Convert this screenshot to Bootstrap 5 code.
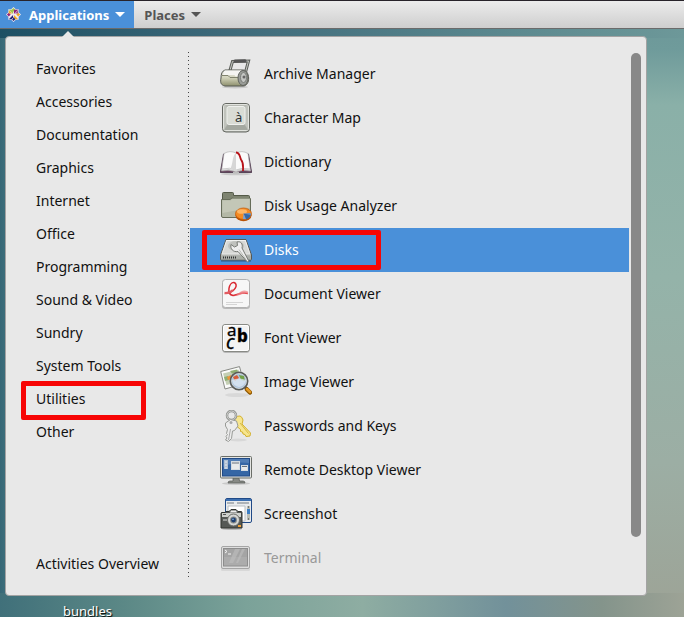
<!DOCTYPE html>
<html lang="en">
<head>
<meta charset="utf-8">
<meta name="viewport" content="width=device-width, initial-scale=1">
<title>Applications menu</title>
<link href="https://cdn.jsdelivr.net/npm/bootstrap@5.3.0/dist/css/bootstrap.min.css" rel="stylesheet">
<style>
body{font-family:"Noto Sans","Open Sans",sans-serif;font-size:14px;line-height:20px;color:#111;
 background:
 linear-gradient(90deg,#1d4f63 0,#3f6b7b 35%,#5c898f 75%,#6d9899 100%) top/100% 38px no-repeat,
 linear-gradient(90deg,#40707a 0,#5b8886 18%,#7ba299 36%,#8eada2 53%,#72919a 74%,#84948b 88%,#9da396 100%) bottom/100% 24px no-repeat,
 linear-gradient(90deg,#1d4f6380 0,#1d4f6300 20px) no-repeat,
 linear-gradient(90deg,#50808a 0,#50808a 3%,transparent 3%) no-repeat,
 linear-gradient(180deg,#6a9597 0,#6f9b9b 8%,#8ab0a8 17%,#94b3a9 45%,#9caea4 75%,#9da396 100%)}
.topbar{height:29px;background:linear-gradient(#ececec,#cecece);border-top:1px solid #28232a;border-bottom:1px solid #6b6b6b}
.topbar .btn{font-size:13px;font-weight:700;line-height:20px;border:0;border-radius:0;color:#555;padding:0 10px}
.topbar .btn.active{background:#4a90d9;color:#fff;padding:0 9px 0 6px}
.topbar .btn::after{content:"";border:5px solid transparent;border-top-color:currentColor;border-bottom:0;margin-left:6px}
.logo{width:15px;height:15px;margin-right:8px}
.app-menu{margin:7px 37px 0 5px;background:#e8e8e8;border:1px solid #a3a3a3;border-radius:4px;padding:15px 5px 15px 0}
.app-menu::before{content:"";position:absolute;left:56px;top:-6px;border:6px solid transparent;border-bottom-color:#e8e8e8;border-top:0}
.cats{width:183px;padding-left:15px;background:repeating-linear-gradient(#444 0 1px,transparent 1px 4px) right top/1px 100% no-repeat}
.cats .btn{height:33px;padding:0 15px}
.apps{padding:0 2px 0 1px}
.apps .btn{height:44px;padding:0 30px;gap:12px}
.app-menu .btn{font-size:14px;border:0;border-radius:0;text-align:left;color:#111;line-height:20px}
.apps .btn.active{background:#4a90d9;color:#fff}
.apps .btn.faded{color:#999}
.apps svg{width:32px;height:32px;flex:none}
.marked::after{content:"";position:absolute;border:5px solid #f70505;border-radius:2px}
.cats .marked::after{left:0;top:-1px;width:125px;height:39px}
.apps .marked::after{left:12px;top:2px;width:179px;height:40px}
.thumb{width:10px;height:484px;border-radius:5px;background:#888;margin-top:1px}
.desk-icon{color:#fff;font-size:13px;margin:5px 0 0 63px;text-shadow:1px 1px 1px #000}
</style>
<script defer src="https://cdn.jsdelivr.net/npm/bootstrap@5.3.0/dist/js/bootstrap.bundle.min.js"></script>
</head>
<body class="vh-100 overflow-hidden">
<header class="topbar d-flex">
 <button type="button" class="btn active d-flex align-items-center">
  <svg class="logo" viewBox="0 0 16 16" aria-hidden="true"><path fill="#f4e9ee" d="M8 0l2.500 2.500H13.500V5.500L16 8l-2.500 2.500v3h-3L8 16l-2.500-2.500h-3v-3L0 8l2.500-2.500v-3h3z"/><path fill="#a1c64b" d="M3 3h4.500v4.500zM8 1l2 2-2 2-2-2z"/><path fill="#932279" d="M13 3H8.500v4.500zM1 8l2-2 2 2-2 2z"/><path fill="#efa724" d="M13 13H8.500V8.500zM15 8l-2-2-2 2 2 2z"/><path fill="#262577" d="M3 13h4.500V8.500zM8 15l-2-2 2-2 2 2z"/><path fill="#efa724" d="M3 3.500v3.500l3.500 0z"/><path fill="#a14f8c" d="M13 3.500v3.500H9.500z"/></svg>Applications</button>
 <button type="button" class="btn d-flex align-items-center">Places</button>
</header>
<main class="app-menu position-relative d-flex">
 <nav class="cats d-flex flex-column flex-shrink-0" aria-label="Categories">
  <button type="button" class="btn">Favorites</button>
  <button type="button" class="btn">Accessories</button>
  <button type="button" class="btn">Documentation</button>
  <button type="button" class="btn">Graphics</button>
  <button type="button" class="btn">Internet</button>
  <button type="button" class="btn">Office</button>
  <button type="button" class="btn">Programming</button>
  <button type="button" class="btn">Sound &amp; Video</button>
  <button type="button" class="btn">Sundry</button>
  <button type="button" class="btn">System Tools</button>
  <button type="button" class="btn marked position-relative">Utilities</button>
  <button type="button" class="btn">Other</button>
  <button type="button" class="btn mt-auto">Activities Overview</button>
 </nav>
 <section class="apps d-flex flex-column flex-grow-1" aria-label="Utilities">
  <button type="button" class="btn d-flex align-items-center">
   <svg viewBox="0 0 32 32" aria-hidden="true"><defs><linearGradient id="metal" x2="0" y2="1"><stop stop-color="#fff"/><stop offset="1" stop-color="#a5a7a0"/></linearGradient><linearGradient id="olive" x2="0" y2="1"><stop stop-color="#eee"/><stop offset=".5" stop-color="#d0d1b8"/><stop offset="1" stop-color="#8d8f6d"/></linearGradient></defs><ellipse cx="15" cy="29" rx="13" ry="1.500" fill="#0002"/><path d="M9.500 14l3-10.500 16-.5-3.500 13" fill="none" stroke="#5d605b" stroke-width="3"/><path d="M9.500 14l3-10.500 16-.5-3.500 13" fill="none" stroke="#c5c7c3"/><path d="M15 3.200l10-.3" stroke="#555" stroke-width="3.200" stroke-linecap="round"/><path d="M5 12h18c7 0 8 16 0 16H5c-4-1-5-3-4-8 0-4 1-7 4-8z" fill="url(#olive)" stroke="#555851"/><path d="M4.500 12.500h17v6h-6l-1-1.500H3z" fill="#f5f5f2"/><path d="M2 17.500h6l2 2h9" fill="none" stroke="#80836d"/><ellipse cx="23" cy="20" rx="5" ry="7.500" fill="#9a9d98" stroke="#60635f"/><ellipse cx="23.500" cy="19.500" rx="3" ry="5" fill="#c4c6c3" stroke="#7b7e7a"/><circle cx="24" cy="19" r="1.500" fill="#666"/></svg>Archive Manager</button>
  <button type="button" class="btn d-flex align-items-center">
   <svg viewBox="0 0 32 32" aria-hidden="true"><rect x="2.500" y="1.500" width="27" height="28.500" rx="3.500" fill="#b7bab3" stroke="#656862"/><rect x="3.500" y="2.500" width="25" height="26" rx="2.500" fill="none" stroke="#e2e4df"/><path d="M4 3l4 3v15l-4 6zM28 3l-4 3v15l4 6z" fill="#c0c3bc"/><path d="M4 28l4-6h16l4 6z" fill="#a4a8a0"/><rect x="7" y="4.500" width="18" height="18" rx="2" fill="#d9dcd5" stroke="#eff0ed"/><text x="15" y="20" font-size="13" fill="#2e3436" font-family="Noto Sans,sans-serif">à</text></svg>Character Map</button>
  <button type="button" class="btn d-flex align-items-center">
   <svg viewBox="0 0 32 32" aria-hidden="true"><ellipse cx="16" cy="28" rx="15" ry="1.300" fill="#0002"/><path d="M3.500 8H28.500L31.700 26.500H.3z" fill="#66445d" stroke="#38243a" stroke-width=".7"/><path d="M4 7.500Q10 4 16 7q6-3 12 .5L30.500 25q-8-2-14.500 1Q9.500 23 1.500 25z" fill="#fafafa" stroke="#aaa" stroke-width=".6"/><path d="M2 23q8-2 14 1 6-3 14-1M1.700 24.300q8-2 14.300 1 6-3 14.300-1" fill="none" stroke="#aaa" stroke-width=".6"/><path d="M16 7v18c-3-2-4-2-6-2 3-3 2-14 6-16z" fill="#d6d6d6"/><path d="M16 6.500c4 0 3.500 4 5 7 3 4 2 6 2 11.500" fill="none" stroke="#b71218" stroke-width="1.800"/><path d="M13 26h6v1.500h-6z" fill="#bbb"/></svg>Dictionary</button>
  <button type="button" class="btn d-flex align-items-center">
   <svg viewBox="0 0 32 32" aria-hidden="true"><path d="M2.500 14V3.500q0-1 1-1h9q1 0 1 1v2h15q1 0 1 1V14z" fill="#7e8471" stroke="#545a48"/><path d="M14 7h15v4H9z" fill="#9aa08c"/><path d="M1.500 9.500H10l2-1.500h17.500q1 0 1 1v17q0 1.500-1.500 1.500H3q-1.500 0-1.500-1.500z" fill="#b3b8a6" stroke="#666c59"/><path d="M2.500 10.500h8l2-1.500h17v9L2.500 23z" fill="#c3c7b7"/><ellipse cx="23.500" cy="25.500" rx="8" ry="5.800" fill="#b95205"/><ellipse cx="23.500" cy="23.700" rx="8" ry="5.700" fill="#f58b22" stroke="#c55d0a" stroke-width=".8"/><ellipse cx="22" cy="21.500" rx="5" ry="2.300" fill="#ffc078" opacity=".8"/><path d="M23.500 23.500l7.500 1q-1 4-5 5z" fill="#3468a8"/><path d="M23.500 23.500L23 29l3 .2z" fill="#7aa2d5"/><path d="M23.500 23.500l7-.5.5 2z" fill="#6191cc"/></svg>Disk Usage Analyzer</button>
  <button type="button" class="btn active marked position-relative d-flex align-items-center">
   <svg viewBox="0 0 32 32" aria-hidden="true"><path d="M1 26h30v2H1z" fill="#0003"/><path d="M6 5.500h20L31.500 21v4q0 1-1 1h-29q-1 0-1-1v-4z" fill="url(#metal)" stroke="#555753"/><path d="M6.700 6.500h18.600L30 20H2z" fill="#d8d9d6" stroke="#f7f7f7" stroke-width=".6"/><ellipse cx="16" cy="12" rx="8" ry="5" fill="#bfc1bd"/><path d="M1 21.500h30v4H1z" fill="#aaaea8"/><path d="M3 23.500h13" stroke="#333" stroke-width="2" stroke-dasharray="1 1"/><path d="M11 10.500l3.500 2.500 3-1.500-.5-3.500c4-1 6 2 5 6l6.500 12.500q.5 2-1 1.500L18 17.500c-5 1-8-3-7-7z" fill="#eee" stroke="#777a75"/><path d="M19 15.500l7 10" stroke="#babdb6"/></svg>Disks</button>
  <button type="button" class="btn d-flex align-items-center">
   <svg viewBox="0 0 32 32" aria-hidden="true"><rect x="2" y="2" width="28" height="29" rx="3" fill="#0003"/><rect x="2.500" y="1.500" width="27" height="28" rx="3" fill="#f7f7f7" stroke="#b2b2b2"/><path d="M5 15C15 15 19 6 14 4.500 9 4 6 16 13 17.500c5 0 7-4 15-2" fill="none" stroke="#d92730" stroke-width="1.500"/><path d="M13 17.500c6 0 8-8 15-4v2.500c-5-2-9 3-15 1.500z" fill="#ef8589" opacity=".75"/><path d="M4.500 15c3.500.5 6.500-1 8.500-3" stroke="#e25c62" stroke-width="2.300" fill="none"/><path d="M6 24.500h17M6 26.500h11" stroke="#ccc" stroke-width=".8"/></svg>Document Viewer</button>
  <button type="button" class="btn d-flex align-items-center">
   <svg viewBox="0 0 32 32" aria-hidden="true"><rect x="2.500" y="3" width="27" height="28" rx="3" fill="#0003"/><rect x="2.500" y="2.500" width="27" height="27" rx="2.500" fill="#f3f3f3" stroke="#888a85"/><rect x="3.500" y="3.500" width="25" height="25" rx="2" fill="none" stroke="#fff"/><text font-size="17" font-family="Noto Sans,sans-serif" stroke="#000" stroke-width=".3"><tspan x="7" y="14">a</tspan><tspan x="17" y="20" font-weight="800">b</tspan><tspan x="6" y="27" font-size="19" font-style="italic">c</tspan></text></svg>Font Viewer</button>
  <button type="button" class="btn d-flex align-items-center">
   <svg viewBox="0 0 32 32" aria-hidden="true"><ellipse cx="17" cy="29" rx="12" ry="2" fill="#0001"/><path d="M.7 5.500L19.500.6l4.700 17L5 23z" fill="#fbfbfb" stroke="#888a85"/><path d="M3 7.500L18.500 3.400l3 12L6.500 19z" fill="#c4cfb4"/><path d="M4 11l4-1 1 4-4 1zM10 5l7-1.500 1 3-6 1z" fill="#8fae72"/><path d="M7 11l4-2 1 4-4 1z" fill="#e8943d"/><circle cx="19" cy="15" r="8.500" fill="#a9c3df" fill-opacity=".9" stroke="#595c5a" stroke-width="2"/><circle cx="19" cy="15" r="7.500" fill="none" stroke="#d8dde0" stroke-width=".8"/><path d="M13 11l4-2 2 3-4 3z" fill="#d85c36"/><path d="M19 9l5 1 1 5-4-1z" fill="#74a249"/><path d="M12 14q7-3 14 0-1 6-7 7-6-1-7-7z" fill="#dfe8f3" opacity=".75"/><path d="M25 21l2 2" stroke="#555" stroke-width="3"/><path d="M27 23.500l3 3" stroke="#8f5902" stroke-width="4.500" stroke-linecap="round"/><path d="M27 23l3 3" stroke="#e39a27" stroke-width="2.500" stroke-linecap="round"/></svg>Image Viewer</button>
  <button type="button" class="btn d-flex align-items-center">
   <svg viewBox="0 0 32 32" aria-hidden="true"><ellipse cx="18" cy="30" rx="9" ry="1.500" fill="#0001"/><path d="M15 8q6-5 8 2l-1 4 8.500 9-.5 3-4 .5-1-2-2-.5-.5-2-2-.5v-2l-3.500-3q-5-3-2-8.500z" fill="#f7e68f" stroke="#d3b12e"/><path d="M20 13l8.500 10.500" stroke="#d9ba43"/><circle cx="11.500" cy="5.500" r="4.500" fill="none" stroke="#8f918e" stroke-width="2.500"/><circle cx="11.500" cy="5.500" r="4.500" fill="none" stroke="#d2d3d1"/><path d="M5.500 13l5-3.500 6 1.500 1.500 5-3.500 4.500-2 .5-1 7.500-3 3-3-1.500 1.500-2-1-1.500 1.500-2-1-1 1-4-2-3.500z" fill="#ececec" stroke="#999b97"/><path d="M10.500 19L8.500 30" stroke="#aaa"/><circle cx="11" cy="12.500" r="1.500" fill="#aaa"/></svg>Passwords and Keys</button>
  <button type="button" class="btn d-flex align-items-center">
   <svg viewBox="0 0 32 32" aria-hidden="true"><ellipse cx="16" cy="29.500" rx="14" ry="1.500" fill="#0002"/><path d="M13 24h6l.5 3H23q2 0 2 2H8q0-2 2-2h3z" fill="#888a85" stroke="#555753" stroke-width=".7"/><rect x=".5" y="2.500" width="31" height="21.500" rx="1" fill="#e4e5e2" stroke="#6b6e68"/><rect x="2.500" y="4.500" width="27" height="17.500" fill="#3566a5" stroke="#204a87"/><path d="M3 13Q14 7 29 9V5H3z" fill="#6a92c6" opacity=".5"/><rect x="4" y="6" width="4" height="9" fill="#aebfd2"/><path d="M5 8h2m-2 3h2m-2 3h2" stroke="#e4eaf1"/><rect x="11.500" y="7.500" width="8" height="8" fill="#e8eaeb" stroke="#d4dbe2"/><path d="M12 9h7" stroke="#66717d"/><rect x="21.500" y="11.500" width="6" height="5" fill="#e8eaeb" stroke="#d4dbe2"/><path d="M22 12.500h5" stroke="#66717d"/></svg>Remote Desktop Viewer</button>
  <button type="button" class="btn d-flex align-items-center">
   <svg viewBox="0 0 32 32" aria-hidden="true"><rect x="5.500" y=".5" width="26" height="24" rx="1.500" fill="#e9ebed" stroke="#204a87"/><path d="M6 1h25v2H6z" fill="#3d70b1"/><path d="M7 4h7v2H7zm10 0h12v2H17z" fill="#aeb3b7"/><path d="M8 8h17v15H8z" fill="#fff" stroke="#bbc0c4"/><path d="M28.500 8v14" stroke="#babdb6" stroke-width="3"/><path d="M28.500 11v5" stroke="#3d7fc4" stroke-width="3"/><path d="M28 9h1m-1 12h1" stroke="#333"/><ellipse cx="12" cy="31" rx="10" ry="1" fill="#0003"/><path d="M1.500 14.500H5l1-1h3l2-2h5l2 2h3q1 0 1 1V30h-21V15.500z" fill="#555855" stroke="#30332f"/><path d="M2 15h19v4H2z" fill="#cfd1cd"/><path d="M11 12.500h5l1 2h-7z" fill="#eee"/><circle cx="13.500" cy="22" r="6" fill="#d6d7d5" stroke="#696b67"/><circle cx="13.500" cy="22" r="3.500" fill="#8b8e8c"/><circle cx="13.500" cy="22" r="2.400" fill="#1e4072"/><circle cx="13" cy="21.300" r=".8" fill="#9cc1e8"/><path d="M3 22h4" stroke="#ddd"/><path d="M18 27h3v2h-3z" fill="#f0a23a"/><path d="M3 16.500h3" stroke="#555"/></svg>Screenshot</button>
  <button type="button" class="btn faded d-flex align-items-center">
   <svg viewBox="0 0 32 32" aria-hidden="true"><rect x="1" y="24" width="29" height="5" rx="1" fill="#0001"/><rect x="1.500" y="4.500" width="28" height="22" rx="1.500" fill="#dedede" stroke="#a5a5a5"/><rect x="3.500" y="6.500" width="24" height="17.500" fill="#a4a4a4" stroke="#8d8d8d"/><path d="M15 7h5l-7 14H9zM22 7h3l-7 14h-2z" fill="#bababa" opacity=".7"/><path d="M4 15h23v8.500H4z" fill="#bcbcbc" opacity=".35"/><path d="M5 8l2 1.500L5 11m3 1h3" fill="none" stroke="#f5f5f5"/></svg>Terminal</button>
 </section>
 <div class="thumb flex-shrink-0" aria-hidden="true"></div>
</main>
<div class="desk-icon">bundles</div>
</body>
</html>
